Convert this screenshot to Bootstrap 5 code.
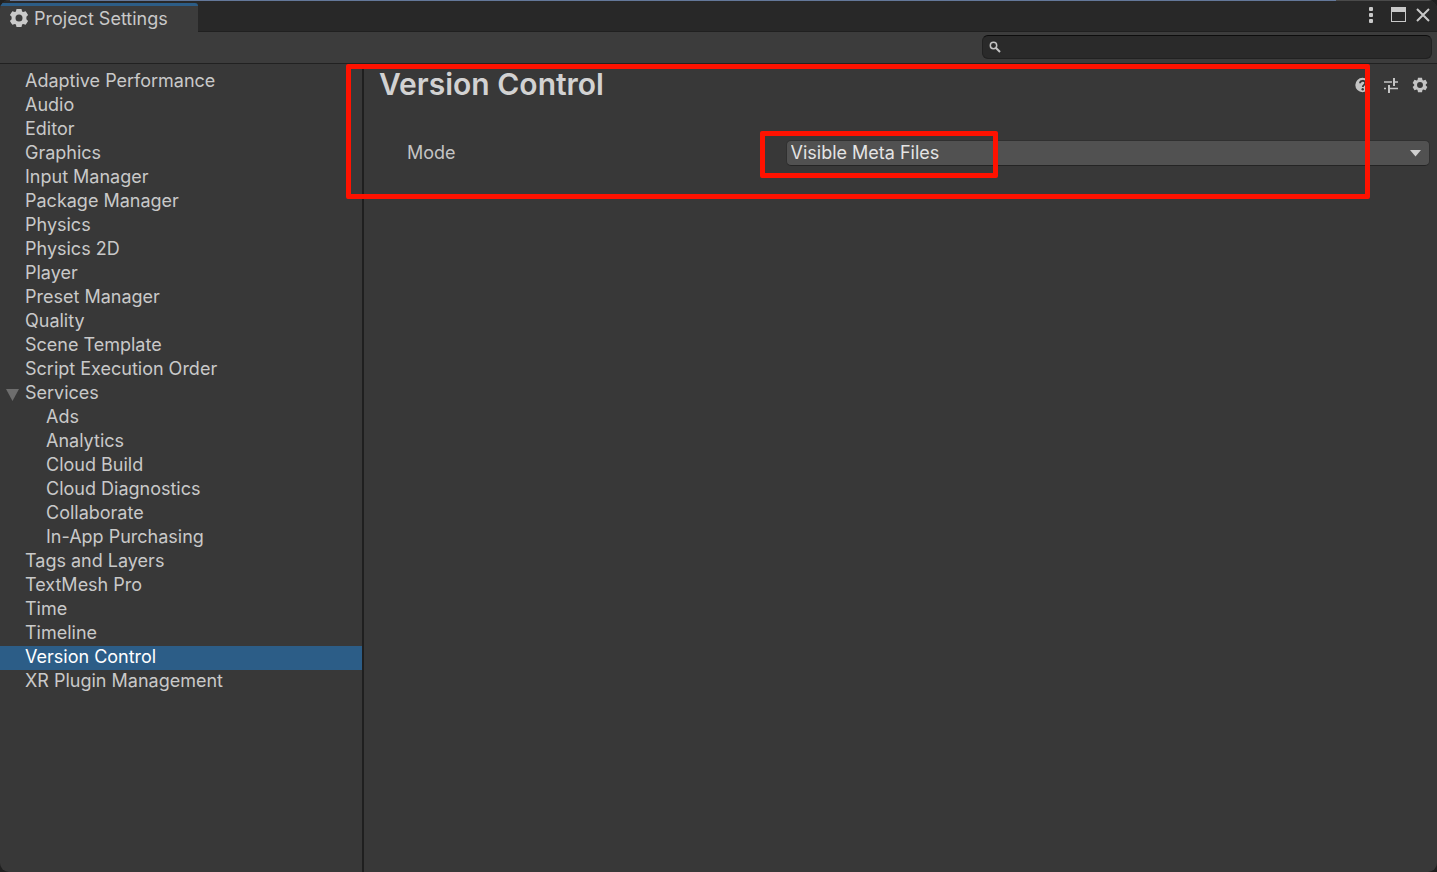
<!DOCTYPE html>
<html lang="en">
<head>
<meta charset="utf-8">
<meta name="viewport" content="width=device-width, initial-scale=1">
<title>Project Settings</title>
<link href="https://cdn.jsdelivr.net/npm/bootstrap@5.3.0/dist/css/bootstrap.min.css" rel="stylesheet">
<style>
  body { background: #202020; color: #c9c9c9; font-family: Inter, "Liberation Sans", sans-serif; font-size: 18px; line-height: 24px; }
  .window { background: #383838; border-radius: 9px; overflow: hidden; }
  .backdrop { height: 1px; background: linear-gradient(90deg, #333 10px, #64789a 10px, #64789a 93%, #4a4a4a 93%); }
  .titlebar { height: 31px; background: #282828; box-shadow: inset 0 -1px #202020; }
  .tab { width: 198px; margin-top: 2px; padding: 0 9px; gap: 5px; background: #3c3c3c; border-top: 3px solid #2c5d87; border-top-right-radius: 3px; color: #c9c9c9; }
  .tab svg { margin-bottom: 2px; }
  .win-btn { border: 0; padding: 0; background: none; color: #c9c9c9; display: flex; }
  .win-btns { gap: 9px; padding: 0 7px 3px 0; }
  .toolbar { height: 32px; background: #3c3c3c; border-bottom: 1px solid #212121; padding: 3px 5px 4px; }
  .search { width: 450px; height: 24px; padding: 0 6px; gap: 4px; background: #2a2a2a; border: 1px solid #212121; border-top-color: #0d0d0d; border-radius: 6px; }
  .search input { background: none; border: 0; outline: 0; color: #d2d2d2; font-size: 16px; min-width: 0; }
  .sidebar { width: 364px; padding-top: 6px; border-right: 2px solid #1f1f1f; }
  .sidebar a { display: block; height: 24px; line-height: 22px; padding-left: 25px; color: #c9c9c9; text-decoration: none; }
  .sidebar .child { padding-left: 46px; }
  .sidebar a.active { background: #2c5d87; color: #fff; }
  .fold { left: 6px; top: 7px; }
  .page-title { font-size: 30px; line-height: 40px; font-weight: 600; color: #d2d2d2; }
  .page-head { padding: 0 9px 0 15px; }
  .page-actions { gap: 13px; padding-top: 2px; }
  .setting { margin-top: 36px; padding: 0 7px 0 43px; }
  .setting label { width: 37%; line-height: 26px; flex: none; color: #c4c4c4; }
  .mode { width: 100%; height: 26px; padding: 0 4px; appearance: none; background: #515151; color: #e4e4e4; border: 1px solid #303030; border-bottom-color: #242424; border-radius: 5px; line-height: 24px; display: block; }
  .arrow { right: 9px; top: 10px; pointer-events: none; }
  .outline { border: 5px solid #ff1200; border-radius: 2px; pointer-events: none; z-index: 2; }
  .outline-page { left: -18px; right: 67px; top: 0; height: 135px; }
  .outline-mode { left: -26px; top: -9px; width: 238px; height: 47px; }
</style>
</head>
<body>
<div class="window d-flex flex-column min-vh-100">
  <div class="backdrop"></div>
  <header class="titlebar d-flex justify-content-between">
    <div class="tab d-flex align-items-center">
      <svg width="20" height="20" viewBox="0 0 20 20" fill="#c9c9c9" fill-rule="evenodd" aria-hidden="true"><path d="M7.500 1h5l.6 2.500 1 .6 2.600-.8 2.400 3.700-1.700 1.800v2.400l1.700 1.800-2.400 3.700-2.600-.8-1 .6-.6 2.500h-5l-.6-2.500-1-.6-2.600.8L.9 13l1.700-1.800V8.800L.9 7l2.400-3.700 2.600.8 1-.6zM10 6.500a3.500 3.500 0 1 0 0 7 3.500 3.500 0 0 0 0-7z"/></svg>
      <span>Project Settings</span>
    </div>
    <div class="win-btns d-flex align-items-center">
      <button class="win-btn" type="button" aria-label="Menu"><svg width="14" height="16" viewBox="0 0 14 16" fill="currentColor"><rect x="2" y="0" width="4" height="4" rx="1"/><rect x="2" y="6" width="4" height="4" rx="1"/><rect x="2" y="12" width="4" height="4" rx="1"/></svg></button>
      <button class="win-btn" type="button" aria-label="Maximize"><svg width="17" height="16" viewBox="0 0 17 16"><path d="M1 0h15v15H1zM2 5v9h13V5z" fill="currentColor" fill-rule="evenodd"/></svg></button>
      <button class="win-btn" type="button" aria-label="Close"><svg width="14" height="14" viewBox="0 0 14 14"><path d="M1 1l12 12M13 1L1 13" stroke="currentColor" stroke-width="2"/></svg></button>
    </div>
  </header>
  <div class="toolbar d-flex justify-content-end">
    <div class="search d-flex align-items-center">
      <svg width="12" height="12" viewBox="0 0 12 12" fill="none" stroke="#c4c4c4" aria-hidden="true"><circle cx="4.500" cy="4.500" r="3.200" stroke-width="1.500"/><path d="M7 7l4 4" stroke-width="2"/></svg>
      <input class="flex-grow-1" type="text" aria-label="Search settings">
    </div>
  </div>
  <div class="d-flex flex-grow-1">
    <nav class="sidebar flex-shrink-0">
      <a href="#">Adaptive Performance</a>
      <a href="#">Audio</a>
      <a href="#">Editor</a>
      <a href="#">Graphics</a>
      <a href="#">Input Manager</a>
      <a href="#">Package Manager</a>
      <a href="#">Physics</a>
      <a href="#">Physics 2D</a>
      <a href="#">Player</a>
      <a href="#">Preset Manager</a>
      <a href="#">Quality</a>
      <a href="#">Scene Template</a>
      <a href="#">Script Execution Order</a>
      <a href="#" class="position-relative"><svg class="fold position-absolute" width="13" height="12" viewBox="0 0 13 12" fill="#6e6e6e" aria-hidden="true"><path d="M0 0h13L6.500 12z"/></svg>Services</a>
      <a href="#" class="child">Ads</a>
      <a href="#" class="child">Analytics</a>
      <a href="#" class="child">Cloud Build</a>
      <a href="#" class="child">Cloud Diagnostics</a>
      <a href="#" class="child">Collaborate</a>
      <a href="#" class="child">In-App Purchasing</a>
      <a href="#">Tags and Layers</a>
      <a href="#">TextMesh Pro</a>
      <a href="#">Time</a>
      <a href="#">Timeline</a>
      <a href="#" class="active" aria-current="page">Version Control</a>
      <a href="#">XR Plugin Management</a>
    </nav>
    <main class="flex-grow-1 position-relative">
      <div class="page-head d-flex justify-content-between align-items-center">
        <h1 class="page-title m-0">Version Control</h1>
        <div class="page-actions d-flex align-items-center">
          <button class="win-btn" type="button" aria-label="Help"><svg width="15" height="16" viewBox="0 0 15 16"><circle cx="7.500" cy="8" r="7.200" fill="#c4c4c4"/><path d="M5 6.200c0-3.200 5.200-3.200 5.200-.2 0 2-2.400 1.800-2.400 4" fill="none" stroke="#383838" stroke-width="1.800"/><circle cx="7.700" cy="12.200" r="1.200" fill="#383838"/></svg></button>
          <button class="win-btn" type="button" aria-label="Presets"><svg width="16" height="16" viewBox="0 0 16 16" fill="none" stroke="#c4c4c4"><path d="M1 5h8M11 5h4M1 11.500h2M6 11.500h9" stroke-width="1.500"/><path d="M11 1v8M6 8v8" stroke-width="2"/></svg></button>
          <button class="win-btn" type="button" aria-label="Settings"><svg width="16" height="16" viewBox="0 0 20 20" fill="#c4c4c4" fill-rule="evenodd"><path d="M7.500 1h5l.6 2.700 1 .6 2.800-.8 2.300 4-2 1.900v1.200l2 1.900-2.300 4-2.800-.8-1 .6-.6 2.700h-5l-.6-2.700-1-.6-2.800.8-2.300-4 2-1.900V9.400l-2-1.900 2.300-4 2.800.8 1-.6zM10 6.300a3.700 3.700 0 1 0 0 7.400 3.700 3.700 0 0 0 0-7.400z"/></svg></button>
        </div>
      </div>
      <div class="setting d-flex">
        <label for="mode">Mode</label>
        <div class="position-relative flex-grow-1">
          <select class="mode" id="mode"><option>Visible Meta Files</option><option>Hidden Meta Files</option></select>
          <svg class="arrow position-absolute" width="11" height="7" viewBox="0 0 11 7" fill="#d0d0d0" aria-hidden="true"><path d="M0 0h11L5.500 6.500z"/></svg>
          <div class="outline outline-mode position-absolute"></div>
        </div>
      </div>
      <div class="outline outline-page position-absolute"></div>
    </main>
  </div>
</div>
<script src="https://cdn.jsdelivr.net/npm/bootstrap@5.3.0/dist/js/bootstrap.bundle.min.js"></script>
</body>
</html>
